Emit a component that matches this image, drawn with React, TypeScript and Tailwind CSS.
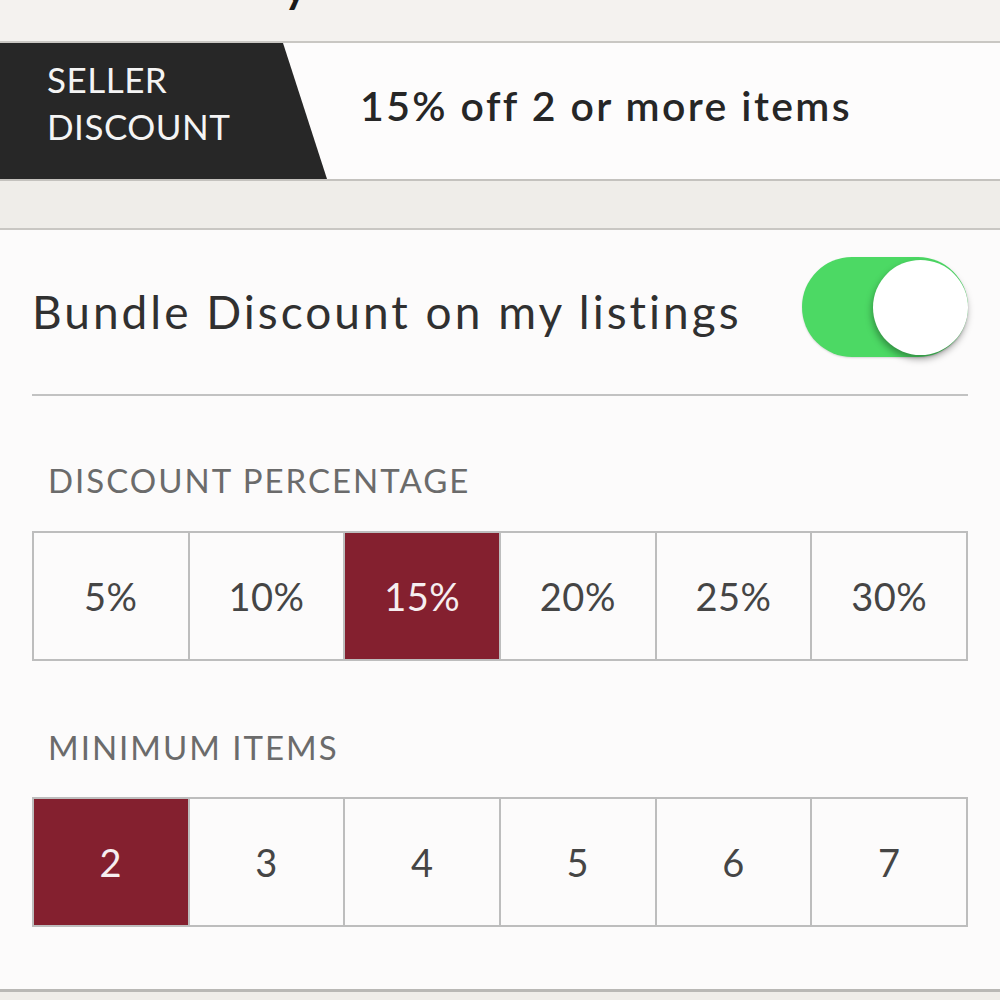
import type { JSX } from 'react';

const percentages = ['5%', '10%', '15%', '20%', '25%', '30%'];
const minimums = ['2', '3', '4', '5', '6', '7'];

// 세그먼트 선택 줄. 선택된 칸만 와인색으로 채운다.
function Segments({ options, selected }: { options: string[]; selected: string }): JSX.Element {
  return (
    <div className="flex h-[130px] border-2 border-[#bdbdbd]">
      {options.map((opt, i) => (
        <div
          key={opt}
          className={
            'flex flex-1 items-center justify-center text-[38px] tracking-[0.5px] ' +
            (i < options.length - 1 ? 'border-r-2 border-[#bdbdbd] ' : '') +
            (opt === selected ? 'bg-[#84202f] text-[#f6eef0]' : 'text-[#454545]')
          }
        >
          {opt}
        </div>
      ))}
    </div>
  );
}

function Toggle(): JSX.Element {
  return (
    <div className="flex h-[100px] w-[166px] items-center justify-end rounded-full bg-[#4cd964] shadow-[0_1px_2px_rgba(0,0,0,0.15)]">
      <div className="h-[95px] w-[95px] rounded-full bg-white shadow-[-1px_4px_7px_rgba(0,0,0,0.35)]" />
    </div>
  );
}

export default function App(): JSX.Element {
  return (
    <div className="flex h-[1000px] w-[1000px] flex-col overflow-hidden bg-[#efede9] font-['Lato',sans-serif]">
      <div className="relative h-[43px] shrink-0 overflow-hidden border-b-2 border-[#c9c7c3] bg-[#f4f2ef]">
        <span className="absolute left-[284px] top-[-47px] text-[44px] font-bold text-[#1a1a1a]">y</span>
      </div>

      <div className="flex h-[138px] shrink-0 items-stretch border-b-2 border-[#c4c2be] bg-[#fdfcfc]">
        <div className="flex w-[327px] flex-col justify-center bg-[#272727] pb-[16px] pl-[47px] text-[35px] leading-[47px] tracking-[0.5px] text-[#f4f4f4] [clip-path:polygon(0_0,283px_0,327px_100%,0_100%)]">
          <span>SELLER</span>
          <span>DISCOUNT</span>
        </div>
        <div className="flex items-center pb-[10px] pl-[33px] text-[41px] font-semibold tracking-[2.4px] text-[#262626]">
          15% off 2 or more items
        </div>
      </div>

      <div className="h-[49px] shrink-0 border-b-2 border-[#c9c7c3]" />

      <div className="flex shrink-0 flex-col border-b-[3px] border-[#b9b8b5] bg-[#fcfbfb] px-[32px] pb-[62px]">
        <div className="flex items-center justify-between pt-[27px]">
          <span className="pt-[8px] text-[46px] tracking-[3px] text-[#303030]">Bundle Discount on my listings</span>
          <Toggle />
        </div>
        <div className="mt-[37px] h-[2px] bg-[#c2c2c2]" />

        <div className="mt-[66px] pl-[16px] text-[33px] leading-[36px] tracking-[2px] text-[#6b6b6b]">
          DISCOUNT PERCENTAGE
        </div>
        <div className="mt-[33px]">
          <Segments options={percentages} selected="15%" />
        </div>

        <div className="mt-[68px] pl-[16px] text-[33px] leading-[36px] tracking-[2px] text-[#6b6b6b]">
          MINIMUM ITEMS
        </div>
        <div className="mt-[32px]">
          <Segments options={minimums} selected="2" />
        </div>
      </div>
    </div>
  );
}
